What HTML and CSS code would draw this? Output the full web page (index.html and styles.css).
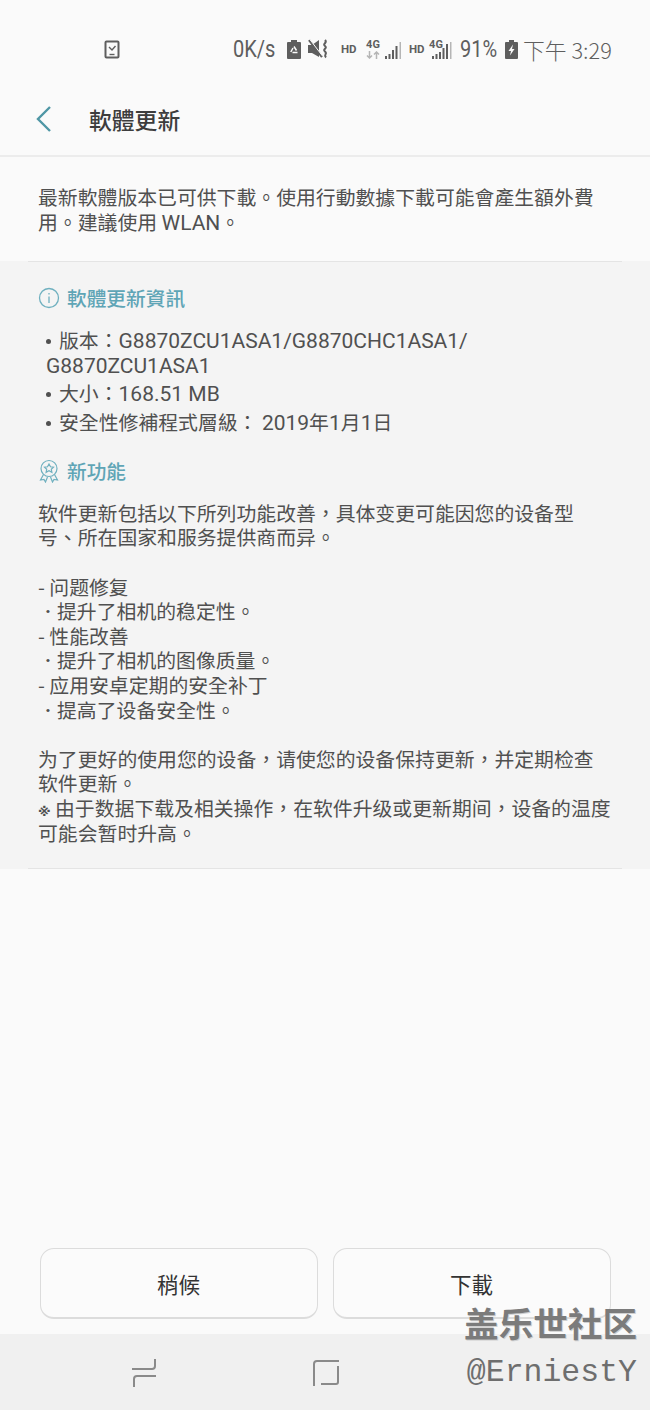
FILE: index.html

```html
<!DOCTYPE html>
<html lang="zh-Hant">
<head>
  <meta charset="UTF-8">
  <meta name="viewport" content="width=device-width, initial-scale=1.0">
  <link rel="stylesheet" href="styles.css">
  <title>軟體更新</title>
</head>
<body>
<div class="screen">
  <div class="status-bar">
    <svg class="status-left" width="16" height="19" viewBox="0 0 16 19" fill="none" stroke="#5e5e5e" stroke-width="2">
      <rect x="1.500" y="1.500" width="13" height="16" rx="1"/>
      <path d="M5 7l3 3 3.500-4" stroke-width="1.400"/>
      <path d="M5.500 14.500h5" stroke-width="1.400"/>
    </svg>
    <div class="status-right">
      <span class="speed"><span class="squeeze">0K/s</span></span>
      <svg class="ico-a" width="14" height="19" viewBox="0 0 14 19"><path d="M4 0h6v2h3a1 1 0 0 1 1 1v15a1 1 0 0 1-1 1H1a1 1 0 0 1-1-1V3a1 1 0 0 1 1-1h3z" fill="#5e5e5e"/><path d="M7 6.500l2.500 4M10.500 12.500h-5M3.800 12l2.200-4" fill="none" stroke="#fafafa" stroke-width="1.500"/></svg>
      <svg class="ico-b" width="22" height="20" viewBox="0 0 22 20"><path d="M0 6h4l7-5v17l-7-4H0z" fill="#5e5e5e"/><path d="M1 1l13 17" stroke="#5e5e5e" stroke-width="2.200"/><path d="M1.500 0l13 17" stroke="#fafafa" stroke-width="1"/><path d="M17 1c3 3-3 3.500 0 6s-3 3 0 5.500-2 3 1 6" fill="none" stroke="#5e5e5e" stroke-width="2"/></svg>
      <span class="hd">HD</span>
      <span class="net"><b>4G</b><svg width="14" height="8" viewBox="0 0 14 8" fill="none" stroke="#b5b5b5" stroke-width="1.500"><path d="M3.500 0v7M1 4.500l2.500 2.500L6 4.500M10.500 8V1M8 3.500L10.500 1 13 3.500"/></svg></span>
      <svg class="bars" width="16" height="18" viewBox="0 0 16 18" fill="#5e5e5e"><path d="M0 15h2v3H0zM3.500 13h2v5h-2zM7 9h2v9H7zM10.500 5h2v13h-2z"/><path d="M14.500 1H16v17h-1.500z" fill="#b5b5b5"/></svg>
      <span class="hd hd-2">HD</span>
      <span class="net net-2"><b>4G</b></span>
      <svg class="bars-2" width="20" height="18" viewBox="0 0 20 18" fill="#5e5e5e"><path d="M0 15h2v3H0zM3.500 13h2v5h-2zM7 11h2v7H7zM10.500 7h2v11h-2zM14 3h2v15h-2z"/><path d="M18 1h1.500v17H18z" fill="#b5b5b5"/></svg>
      <span class="pct"><span class="squeeze">91%</span></span>
      <svg class="ico-c" width="13" height="19" viewBox="0 0 13 19"><path d="M4 0h5v2h3a1 1 0 0 1 1 1v15a1 1 0 0 1-1 1H1a1 1 0 0 1-1-1V3a1 1 0 0 1 1-1h3z" fill="#5e5e5e"/><path d="M8 4.500L3.500 11H6l-1 4.500L9.500 9H7z" fill="#fafafa"/></svg>
      <span class="clock">下午 3:29</span>
    </div>
  </div>

  <div class="app-header">
    <svg class="back" width="18" height="28" viewBox="0 0 18 28" fill="none" stroke="#4f97a5" stroke-width="2.400"><path d="M15 2L3 14l12 12"/></svg>
    <h1>軟體更新</h1>
  </div>

  <p class="intro">最新軟體版本已可供下載。使用行動數據下載可能會產生額外費<br>用。建議使用 <span class="latin">WLAN</span>。</p>

  <div class="details">
    <h2 class="sec-title">
      <svg width="22" height="22" viewBox="0 0 22 22" fill="none" stroke="#6fb0bf" stroke-width="1.300"><circle cx="11" cy="11" r="9.500"/><path d="M11 9.500v6.500M11 6v1.500"/></svg>
      軟體更新資訊
    </h2>
    <ul class="info-list">
      <li>版本：<span class="latin">G8870ZCU1ASA1/G8870CHC1ASA1/</span><br><span class="latin">G8870ZCU1ASA1</span></li>
      <li>大小：<span class="latin">168.51 MB</span></li>
      <li>安全性修補程式層級： <span class="latin">2019</span>年<span class="latin">1</span>月<span class="latin">1</span>日</li>
    </ul>

    <h2 class="sec-title sec-new">
      <svg width="22" height="24" viewBox="0 0 22 24" fill="none" stroke="#6fb0bf" stroke-width="1.200"><circle cx="11" cy="9.500" r="8"/><path d="M11 5l1.500 2.800 3 .4-2.200 2.100.6 3-2.900-1.500-2.900 1.500.6-3L6.500 8.200l3-.4z"/><path d="M5.500 15.500L2.500 21l3.500-.5 1.500 2.500 2-5M16.500 15.500l3 5.500-3.500-.5-1.500 2.500-2-5"/></svg>
      新功能
    </h2>
    <p class="notes">软件更新包括以下所列功能改善，具体变更可能因您的设备型<br>号、所在国家和服务提供商而异。<br><br>- 问题修复<br><span class="dot">·</span>提升了相机的稳定性。<br>- 性能改善<br><span class="dot">·</span>提升了相机的图像质量。<br>- 应用安卓定期的安全补丁<br><span class="dot">·</span>提高了设备安全性。<br><br>为了更好的使用您的设备，请使您的设备保持更新，并定期检查<br>软件更新。<br><span class="mark">※</span>由于数据下载及相关操作，在软件升级或更新期间，设备的温度<br>可能会暂时升高。</p>
  </div>
  <div class="spacer"></div>

  <div class="actions">
    <button class="btn">稍候</button>
    <button class="btn">下載</button>
  </div>

  <div class="nav-bar">
    <svg class="nav-recent" width="26" height="30" viewBox="0 0 26 30" fill="none" stroke="#8a8a8a" stroke-width="2"><path d="M1 11h20a3 3 0 0 0 3-3V1"/><path d="M25 18H6a3 3 0 0 0-3 3v8"/></svg>
    <svg class="nav-home" width="27" height="28" viewBox="0 0 27 28" fill="none" stroke="#8a8a8a" stroke-width="2"><path d="M26 2H4a3 3 0 0 0-3 3v22"/><path d="M25 7v16a2 2 0 0 1-2 2H8"/></svg>
  </div>

  <div class="watermark">
    <div class="wm-cn">盖乐世社区</div>
    <div class="wm-id">@ErniestY</div>
  </div>
</div>
</body>
</html>
```

FILE: styles.css

```css
body {
  margin: 0;
  padding: 0;
  background: #fafafa;
  font-family: "Noto Sans CJK TC", "Noto Sans", sans-serif;
  color: #505050;
}

.screen {
  position: relative;
  width: 650px;
  height: 1410px;
  display: flex;
  flex-direction: column;
  overflow: hidden;
}

.latin {
  font-family: "Roboto", sans-serif;
  font-size: 21px;
}

/* status bar */
.status-bar {
  height: 78px;
  flex: none;
  display: flex;
  align-items: center;
  justify-content: space-between;
  padding: 20px 38px 0 104px;
  box-sizing: border-box;
  color: #5e5e5e;
}

.status-left {
  display: block;
}

.status-right {
  display: flex;
  align-items: center;
}

.status-right > * {
  flex: none;
}

.speed,
.pct,
.clock {
  font-family: "Roboto", "Noto Sans CJK TC", sans-serif;
  font-size: 23px;
  white-space: nowrap;
}

.squeeze {
  display: inline-block;
  transform: scaleX(0.87);
  transform-origin: left center;
}

.speed { width: 42px; }
.pct { width: 37px; margin-left: 8px; }
.clock {
  width: 89px;
  margin-left: 5px;
  font-size: 21.800px;
  font-family: "Noto Sans CJK TC", sans-serif;
  font-weight: 300;
}

.ico-a { margin-left: 12px; }
.ico-b { margin-left: 7px; }
.ico-c { margin-left: 8px; }

.hd {
  width: 16px;
  margin-left: 11px;
  font-family: "Roboto", sans-serif;
  font-size: 11.500px;
  font-weight: 700;
}

.hd-2 { margin-left: 8px; }

.net {
  display: flex;
  flex-direction: column;
  align-items: center;
  gap: 1px;
  width: 14px;
  margin-left: 9px;
  line-height: 10px;
  font-family: "Roboto", sans-serif;
}

.net b { font-size: 11px; }
.net svg { display: block; }
.net-2 { margin-left: 4px; margin-bottom: 9px; }

.bars { margin-left: 5px; margin-top: 2px; }
.bars-2 { margin-left: -11px; margin-top: 2px; }

/* header */
.app-header {
  height: 79px;
  flex: none;
  display: flex;
  align-items: center;
  box-sizing: border-box;
  border-bottom: 2px solid #ececec;
  padding: 5px 0 0 35px;
}

.back { display: block; margin-right: 36px; }

.app-header h1 {
  margin: 0;
  font-size: 22.800px;
  font-weight: 500;
  color: #3d3d3d;
}

.intro {
  margin: 0;
  height: 104px;
  flex: none;
  box-sizing: border-box;
  padding: 28px 30px 0 38px;
  font-size: 19.850px;
  line-height: 24.600px;
  white-space: nowrap;
}

/* gray section */
.details {
  position: relative;
  height: 608px;
  flex: none;
  box-sizing: border-box;
  background: #f4f4f4;
  padding: 22px 28px 0 38px;
  font-size: 19.850px;
  line-height: 24.600px;
  white-space: nowrap;
}

.details::before,
.details::after {
  content: "";
  position: absolute;
  left: 28px;
  right: 28px;
  height: 1px;
  background: #e4e4e4;
}

.details::before { top: 0; }
.details::after { bottom: 0; }

.sec-title {
  margin: 0;
  display: flex;
  align-items: center;
  gap: 7px;
  height: 30px;
  font-size: 19.700px;
  font-weight: 500;
  color: #5fa5b6;
}

.sec-new {
  margin-top: 22px;
}

.info-list {
  list-style: none;
  margin: 15px 0 0;
  padding: 0 0 0 8px;
}

.info-list li {
  margin-bottom: 4px;
}

.info-list li .latin {
  line-height: 1;
}

.info-list li::before {
  content: "";
  display: inline-block;
  width: 5px;
  height: 5px;
  margin: 0 8px 4px 0;
  border-radius: 50%;
  background: #505050;
}

.notes {
  margin: 14.500px 0 0;
}

.dot {
  display: inline-block;
  width: 19px;
  padding-left: 7px;
  box-sizing: border-box;
  font-family: "Roboto", sans-serif;
  font-weight: 700;
  line-height: 1;
}

.mark {
  display: inline-block;
  width: 17px;
  font-family: "DejaVu Sans", sans-serif;
  font-size: 13px;
  font-weight: 700;
  line-height: 1;
}

.spacer {
  flex: 1;
}

/* bottom buttons */
.actions {
  flex: none;
  display: flex;
  justify-content: center;
  gap: 15px;
  padding-bottom: 15px;
}

.btn {
  width: 278px;
  height: 71px;
  background: #fbfbfb;
  border: 1px solid #dcdcdc;
  border-bottom-width: 2px;
  border-radius: 14px;
  font-family: inherit;
  font-size: 21.500px;
  color: #333;
  padding: 0;
}

.nav-bar {
  height: 76px;
  flex: none;
  display: flex;
  align-items: center;
  padding: 2px 0 0 131px;
  box-sizing: border-box;
  background: #f0f0f0;
}

.nav-home { margin-left: 156px; }

.watermark {
  position: absolute;
  right: 13px;
  bottom: 17px;
  text-align: right;
  color: #6e6e6e;
}

.wm-cn {
  font-size: 34.600px;
  line-height: 44px;
  font-weight: 700;
  color: #7b7b7b;
  text-shadow: 1px 1px 0 #d0d0d0;
}

.wm-id {
  font-family: "Liberation Mono", monospace;
  font-size: 31.500px;
  line-height: 40px;
  margin-top: 9px;
}
```
